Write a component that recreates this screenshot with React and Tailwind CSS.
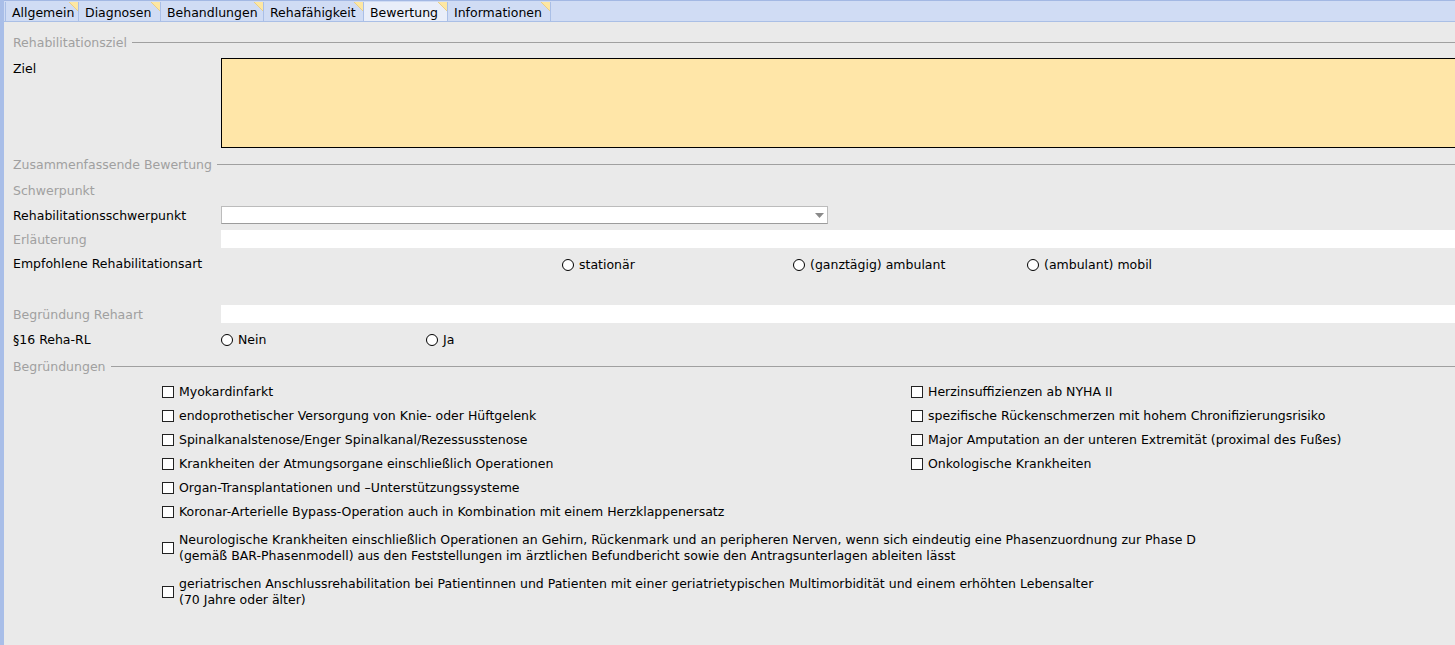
import React from 'react';

const tabs = [
  { label: 'Allgemein', cls: 'w-[73px]' },
  { label: 'Diagnosen', cls: 'w-[82px]' },
  { label: 'Behandlungen', cls: 'w-[103px]' },
  { label: 'Rehafähigkeit', cls: 'w-[100px]' },
  { label: 'Bewertung', cls: 'w-[84px]', active: true },
  { label: 'Informationen', cls: 'w-[103px]' },
];

const leftChecks = [
  'Myokardinfarkt',
  'endoprothetischer Versorgung von Knie- oder Hüftgelenk',
  'Spinalkanalstenose/Enger Spinalkanal/Rezessusstenose',
  'Krankheiten der Atmungsorgane einschließlich Operationen',
  'Organ-Transplantationen und –Unterstützungssysteme',
  'Koronar-Arterielle Bypass-Operation auch in Kombination mit einem Herzklappenersatz',
];

const rightChecks = [
  'Herzinsuffizienzen ab NYHA II',
  'spezifische Rückenschmerzen mit hohem Chronifizierungsrisiko',
  'Major Amputation an der unteren Extremität (proximal des Fußes)',
  'Onkologische Krankheiten',
];

const Corner = () => (
  <svg className="absolute top-0 right-0" width="9" height="9" viewBox="0 0 9 9">
    <polygon points="0,0 9,0 9,9" fill="#fde7a3" />
    <line x1="0" y1="0" x2="9" y2="9" stroke="#e9cf86" strokeWidth="1" />
  </svg>
);

const Tab = ({ label, cls, active }) => (
  <div
    className={`relative h-[19px] flex items-center pl-[6px] border-r border-[#aabfe6] ${cls} ${
      active ? 'bg-[#e9eef9]' : 'bg-[#d0dcf4]'
    }`}
  >
    <span className="text-black translate-y-[1px]">{label}</span>
    <Corner />
  </div>
);

const SectionHeader = ({ title, className = '' }) => (
  <div className={`flex items-center gap-[5px] h-[24px] ${className}`}>
    <span className="text-[#a0a0a0] whitespace-nowrap translate-y-[1px]">{title}</span>
    <div className="flex-1 border-t border-[#a0a0a0]" />
  </div>
);

const Radio = ({ label, className = '' }) => (
  <div className={`flex items-center gap-[5px] shrink-0 translate-y-[1px] ${className}`}>
    <span className="w-[12px] h-[12px] rounded-full border border-black bg-white shrink-0" />
    <span className="text-black">{label}</span>
  </div>
);

const Box = () => <span className="w-[12px] h-[12px] border border-[#222] bg-white shrink-0" />;

const Check = ({ label }) => (
  <div className="flex items-center gap-[5px] h-[24px]">
    <Box />
    <span className="text-black whitespace-nowrap">{label}</span>
  </div>
);

export default function App() {
  return (
    <div className="w-[1455px] h-[645px] overflow-hidden bg-[#eaeaea] border-l-[4px] border-[#a9bee8] text-[12.5px] leading-[16px] font-['DejaVu_Sans',sans-serif]">
      {/* tab strip */}
      <div className="h-[22px] bg-[#d0dcf4] border-t border-[#a3b8e3] border-b border-b-[#aabfe6] flex pl-[1px] pt-[1px]">
        <div className="flex border-l border-[#aabfe6]">
          {tabs.map((t) => (
            <Tab key={t.label} {...t} />
          ))}
        </div>
      </div>

      <div className="pl-[9px]">
        {/* Rehabilitationsziel */}
        <SectionHeader title="Rehabilitationsziel" className="mt-[8px]" />
        <div className="flex mt-[4px] h-[90px]">
          <div className="w-[208px] shrink-0 pt-[2px] text-black translate-y-[1px]">Ziel</div>
          <div className="flex-1 bg-[#ffe6a8] border border-black border-r-0" />
        </div>

        {/* Zusammenfassende Bewertung */}
        <SectionHeader title="Zusammenfassende Bewertung" className="mt-[4px]" />
        <div className="flex items-center h-[24px] mt-[2px]">
          <span className="text-[#a0a0a0] translate-y-[1px]">Schwerpunkt</span>
        </div>
        <div className="flex items-center h-[24px] mt-[1px]">
          <div className="w-[208px] shrink-0 text-black translate-y-[1px]">Rehabilitationsschwerpunkt</div>
          <div className="w-[607px] h-[18px] bg-white border border-[#bcbcbc] border-b-[#9c9c9c] flex items-center justify-end pr-[3px]">
            <svg width="9" height="5" viewBox="0 0 9 5">
              <polygon points="0,0 9,0 4.5,5" fill="#8a8a8a" />
            </svg>
          </div>
        </div>
        <div className="flex items-center h-[24px]">
          <div className="w-[208px] shrink-0 text-[#a0a0a0] translate-y-[1px]">Erläuterung</div>
          <div className="flex-1 h-[18px] bg-white" />
        </div>
        <div className="flex items-start h-[51px] pt-[4px]">
          <div className="w-[208px] shrink-0 text-black translate-y-[1px]">Empfohlene Rehabilitationsart</div>
          <div className="flex ml-[341px] mt-[1px]">
            <Radio label="stationär" className="w-[231px]" />
            <Radio label="(ganztägig) ambulant" className="w-[234px]" />
            <Radio label="(ambulant) mobil" />
          </div>
        </div>
        <div className="flex items-center h-[24px]">
          <div className="w-[208px] shrink-0 text-[#a0a0a0] translate-y-[1px]">Begründung Rehaart</div>
          <div className="flex-1 h-[18px] bg-white" />
        </div>
        <div className="flex items-center h-[24px] mt-[1px]">
          <div className="w-[208px] shrink-0 text-black translate-y-[1px]">§16 Reha-RL</div>
          <Radio label="Nein" className="w-[205px]" />
          <Radio label="Ja" />
        </div>

        {/* Begründungen */}
        <SectionHeader title="Begründungen" className="mt-[3px]" />
        <div className="translate-y-[1px]">
          <div className="ml-[149px] mt-[1px] flex">
            <div className="w-[749px] shrink-0 flex flex-col">
              {leftChecks.map((c) => (
                <Check key={c} label={c} />
              ))}
            </div>
            <div className="flex flex-col">
              {rightChecks.map((c) => (
                <Check key={c} label={c} />
              ))}
            </div>
          </div>
          <div className="ml-[149px] mt-[8px] flex items-center gap-[5px]">
            <Box />
            <div className="text-black whitespace-nowrap">
              <div>
                Neurologische Krankheiten einschließlich Operationen an Gehirn, Rückenmark und an peripheren Nerven, wenn sich eindeutig eine Phasenzuordnung zur Phase D
              </div>
              <div>(gemäß BAR-Phasenmodell) aus den Feststellungen im ärztlichen Befundbericht sowie den Antragsunterlagen ableiten lässt</div>
            </div>
          </div>
          <div className="ml-[149px] mt-[12px] flex items-center gap-[5px]">
            <Box />
            <div className="text-black whitespace-nowrap">
              <div>
                geriatrischen Anschlussrehabilitation bei Patientinnen und Patienten mit einer geriatrietypischen Multimorbidität und einem erhöhten Lebensalter
              </div>
              <div>(70 Jahre oder älter)</div>
            </div>
          </div>
        </div>
      </div>
    </div>
  );
}
